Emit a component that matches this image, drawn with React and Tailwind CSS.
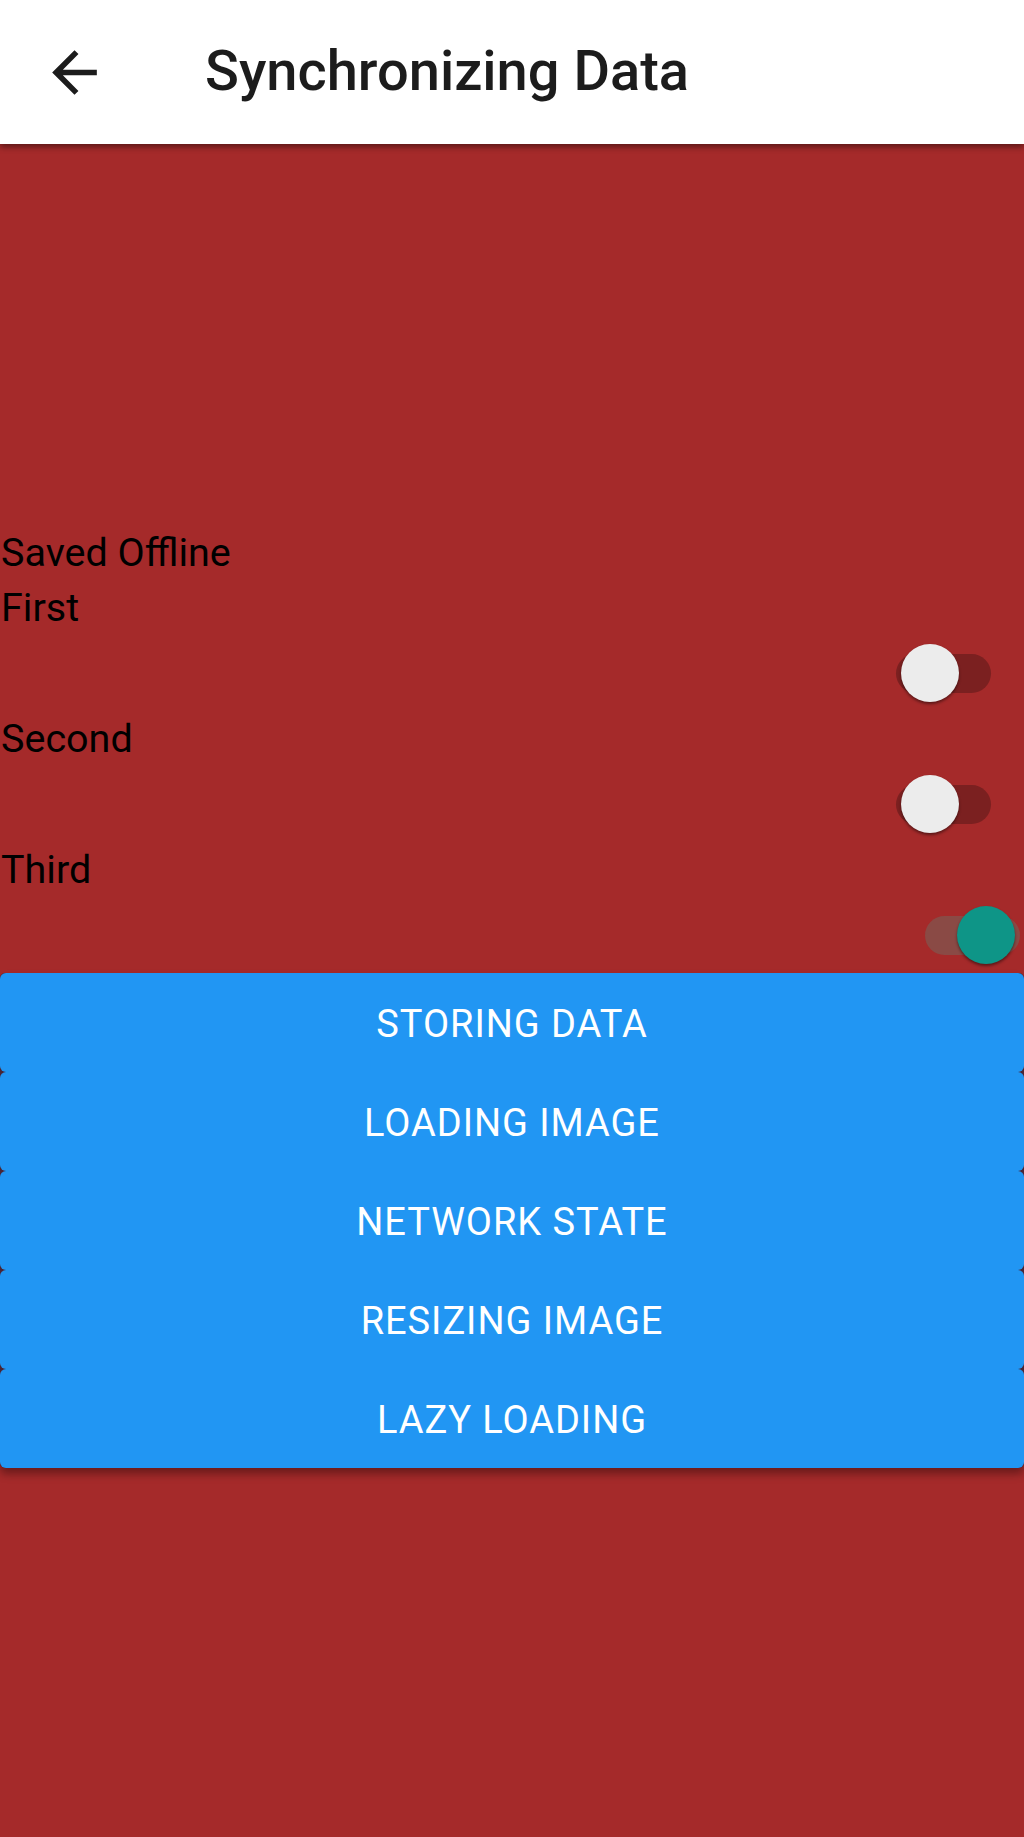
import React, { useState } from 'react';

const options = ['First', 'Second', 'Third'];
const actions = ['Storing Data', 'Loading Image', 'Network State', 'Resizing Image', 'Lazy Loading'];

function Switch({ checked, onChange, shifted }) {
  return (
    <button
      type="button"
      onClick={onChange}
      className={`relative w-[95px] h-[39px] rounded-full ${shifted ? 'mr-[4px]' : 'mr-[33px]'} ${checked ? 'bg-[#8a4a45]' : 'bg-[#7b2020]'}`}
    >
      <span
        className={`absolute top-[-9.5px] w-[58px] h-[58px] rounded-full shadow-[0_2px_3px_rgba(0,0,0,0.45)] ${checked ? 'left-[32px] bg-[#0e9587]' : 'left-[5px] bg-[#ececec]'}`}
      />
    </button>
  );
}

export default function App() {
  const [state, setState] = useState([false, false, true]);

  const toggle = (i) => {
    setState((s) => s.map((v, j) => (j === i ? !v : v)));
  };

  return (
    <div className="min-h-screen w-full bg-[#a52a2a] font-['Roboto','Noto_Sans',sans-serif]">
      {/* Toolbar */}
      <header className="relative z-10 h-[144px] bg-white flex items-center shadow-[0_3px_6px_rgba(0,0,0,0.45)]">
        <svg viewBox="0 0 24 24" className="ml-[41px] w-[67px] h-[67px] fill-[#1c1c1c]">
          <path d="M20 11H7.83l5.59-5.59L12 4l-8 8 8 8 1.41-1.41L7.83 13H20v-2z" />
        </svg>
        <h1 className="ml-[97px] text-[56px] font-medium text-[#1c1c1c] leading-none pb-[2px]">
          Synchronizing Data
        </h1>
      </header>

      <div className="pt-[381px]">
        <p className="pl-[1px] text-[39.5px] leading-[55px] text-black">Saved Offline</p>

        {options.map((label, i) => (
          <div key={label}>
            <p className="pl-[1px] text-[39.5px] leading-[55px] text-black">{label}</p>
            <div className="h-[76px] flex items-center justify-end">
              <Switch checked={state[i]} onChange={() => toggle(i)} shifted={i === 2} />
            </div>
          </div>
        ))}

        {/* Action buttons */}
        <div className="flex flex-col rounded-[5px] bg-[#4a2535] shadow-[0_6px_8px_rgba(0,0,0,0.35)]">
          {actions.map((a) => (
            <button
              key={a}
              type="button"
              className="h-[99px] w-full pt-[4px] rounded-[6px] bg-[#2196f3] text-white text-[38px] uppercase tracking-[0.025em]"
            >
              {a}
            </button>
          ))}
        </div>
      </div>
    </div>
  );
}
